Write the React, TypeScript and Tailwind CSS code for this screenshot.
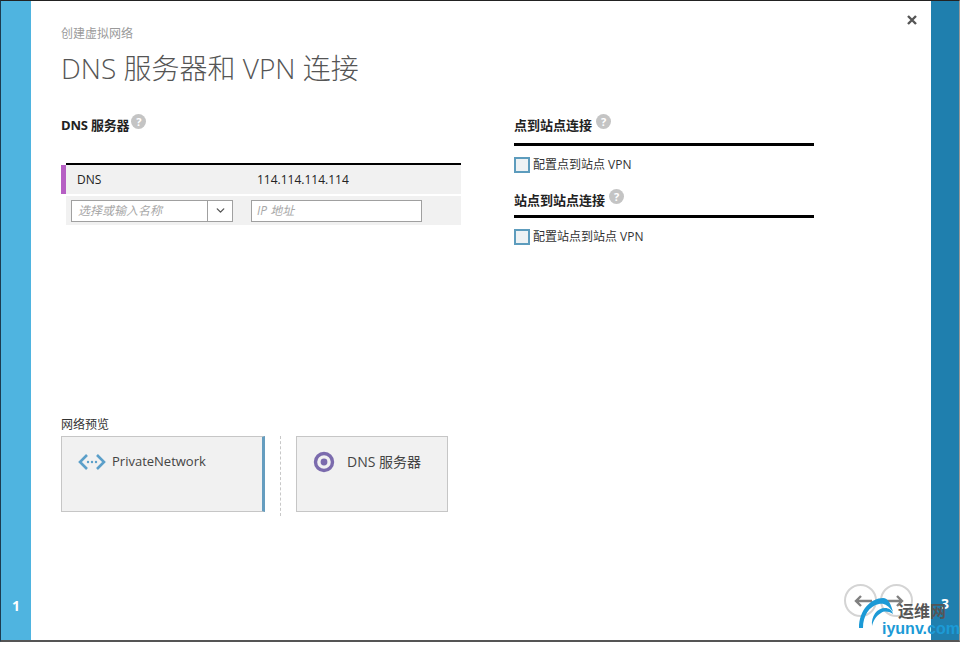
import React from 'react'
import { ChevronDown } from 'lucide-react'

const cjk = "font-['Open_Sans','Noto_Sans_CJK_SC',sans-serif]"

const Help = () => (
  <span className="flex h-[15px] w-[15px] items-center justify-center rounded-full bg-[#c4c4c4] text-[11px] font-bold leading-none text-white">?</span>
)

const Section = ({ title, label, titleClass }: { title: string; label: string; titleClass: string }) => (
  <div>
    <div className={`flex items-start ${titleClass}`}>
      <span className="text-[13px] font-bold leading-[18px] text-[#222]">{title}</span>
      <span className="ml-[4px] -mt-[2px]"><Help /></span>
    </div>
    <div className="h-[3px] bg-black" />
    <label className="mt-[10px] flex h-[18px] items-center">
      <span className="h-[16px] w-[16px] border-2 border-[#5d9cbd] bg-[#eef2f4]" />
      <span className="ml-[3px] text-[12px] text-[#333]">{label}</span>
    </label>
  </div>
)

const PreviewCard = ({ children, accent }: { children: React.ReactNode; accent?: boolean }) => (
  <div className={`h-[76px] border border-[#c6c6c6] bg-[#f1f1f1] ${accent ? 'w-[204px] border-r-[3px] border-r-[#659dbf]' : 'w-[152px]'}`}>
    {children}
  </div>
)

export default function App() {
  return (
    <div className={`relative h-[645px] w-[962px] overflow-hidden bg-white ${cjk}`}>
      <div className="flex h-[642px] w-[960px] border-b-2 border-l border-r border-t border-b-[#555] border-l-[#1c3c50] border-r-[#999] border-t-[#222]">
        <div className="flex w-[30px] shrink-0 items-end justify-center bg-[#4fb4e0] pb-[25px]">
          <span className="text-[14px] font-bold leading-[18px] text-white">1</span>
        </div>

        <div className="relative flex min-w-0 flex-1 flex-col bg-white pl-[30px]">
          <div className="pt-[24px] text-[12px] leading-[18px] text-[#9a9a9a]">创建虚拟网络</div>
          <h1 className="mt-[6px] text-[28px] font-light leading-[38px] text-[#555]">DNS 服务器和 VPN 连接</h1>

          <div className="mt-[29px] flex">
            <div className="w-[400px]">
              <div className="flex h-[47px] items-start">
                <span className="text-[13px] font-bold leading-[18px] tracking-[-0.2px] text-[#222]">DNS 服务器</span>
                <span className="ml-[2px] -mt-[2px]"><Help /></span>
              </div>
              <div className="ml-[5px] h-[2px] bg-black" />
              <div className="flex h-[29px] items-center border-l-[5px] border-l-[#b65fc4] bg-[#f1f1f1] pt-[1px] text-[12px] text-[#222]">
                <span className="ml-[11px] w-[180px]">DNS</span>
                <span>114.114.114.114</span>
              </div>
              <div className="ml-[5px] mt-[2px] flex h-[29px] items-center bg-[#f1f1f1] pl-[5px]">
                <div className="flex h-[22px] w-[162px] items-center border border-[#a0a0a0] bg-white">
                  <span className="flex-1 pl-[6px] text-[12px] italic text-[#a8a8a8]">选择或输入名称</span>
                  <span className="flex h-full w-[25px] items-center justify-center border-l border-[#a0a0a0]">
                    <ChevronDown size={13} strokeWidth={2.5} className="text-[#555]" />
                  </span>
                </div>
                <div className="ml-[18px] flex h-[22px] w-[171px] items-center border border-[#a0a0a0] bg-white pl-[5px] text-[12px] italic text-[#a8a8a8]">
                  IP 地址
                </div>
              </div>
            </div>

            <div className="ml-[53px] flex w-[300px] flex-col gap-[17px]">
              <Section title="点到站点连接" label="配置点到站点 VPN" titleClass="h-[27px]" />
              <Section title="站点到站点连接" label="配置站点到站点 VPN" titleClass="h-[24px]" />
            </div>
          </div>

          <div className="mt-[170px] text-[12px] leading-[18px] text-[#333]">网络预览</div>
          <div className="mt-[2px] flex">
            <PreviewCard accent>
              <div className="flex items-center pl-[16px] pt-[15px]">
                <svg width="28" height="20" viewBox="0 0 28 20" fill="none">
                  <path d="M9 3 2 10l7 7M19 3l7 7-7 7" stroke="#5b9fc9" strokeWidth="2.6" />
                  <circle cx="10" cy="10" r="1.2" fill="#5b9fc9" />
                  <circle cx="14" cy="10" r="1.2" fill="#5b9fc9" />
                  <circle cx="18" cy="10" r="1.2" fill="#5b9fc9" />
                </svg>
                <span className="ml-[6px] text-[13px] text-[#444]">PrivateNetwork</span>
              </div>
            </PreviewCard>
            <div className="ml-[15px] mr-[15px] h-[80px] border-l border-dashed border-[#c8c8c8]" />
            <PreviewCard>
              <div className="flex items-center pl-[16px] pt-[14px]">
                <svg width="22" height="22" viewBox="0 0 22 22" fill="none">
                  <circle cx="11" cy="11" r="8.5" stroke="#7b6bad" strokeWidth="3.4" />
                  <circle cx="11" cy="11" r="3.4" fill="#7b6bad" />
                </svg>
                <span className="ml-[12px] -mt-[2px] text-[14px] text-[#444]">DNS 服务器</span>
              </div>
            </PreviewCard>
          </div>

          <button className="absolute right-[14px] top-[14px] text-[#555]">
            <svg width="10" height="10" viewBox="0 0 10 10">
              <path d="M1 1l8 8M9 1l-8 8" stroke="currentColor" strokeWidth="2.4" />
            </svg>
          </button>

          <div className="absolute bottom-[23px] right-[18px] flex gap-[3px]">
            <span className="flex h-[33px] w-[33px] items-center justify-center rounded-full border-2 border-[#d4d4d4]">
              <svg className="ml-[4px]" width="18" height="14" viewBox="0 0 18 14" fill="none">
                <path d="M18 7H2M7 2 2 7l5 5" stroke="#808080" strokeWidth="2.4" />
              </svg>
            </span>
            <span className="flex h-[33px] w-[33px] items-center justify-center rounded-full border-2 border-[#d4d4d4]">
              <svg className="mr-[4px]" width="18" height="14" viewBox="0 0 18 14" fill="none">
                <path d="M0 7h16M11 2l5 5-5 5" stroke="#808080" strokeWidth="2.4" />
              </svg>
            </span>
          </div>
        </div>

        <div className="flex w-[28px] shrink-0 items-end justify-center bg-[#1f7fae] pb-[27px]">
          <span className="text-[14px] font-bold leading-[18px] text-white">3</span>
        </div>
      </div>

      {/* watermark */}
      <div className="absolute left-[857px] top-[596px] h-[44px] w-[105px]">
        <svg className="absolute left-0 top-0" width="40" height="36" viewBox="0 0 40 36" fill="none">
          <path d="M2 32C2 14 14 2 26 2c5 0 8 6 10 14-5-7-9-9-14-8C12 10 6 20 6 32z" fill="#1c9ad6" />
          <path d="M15 30c-1-10 5-18 13-18 4 0 7 2 8 6-5-3-9-3-12-1-5 3-8 8-9 13z" fill="#1c9ad6" />
        </svg>
        <span className="absolute left-[41px] top-[6px] text-[16px] font-bold leading-[18px] text-[#555]">运维网</span>
        <span className="absolute left-[25px] top-[26px] font-['Liberation_Sans',sans-serif] text-[16px] font-bold leading-[14px] text-[#1c9ad6]">iyunv.com</span>
      </div>
    </div>
  )
}
